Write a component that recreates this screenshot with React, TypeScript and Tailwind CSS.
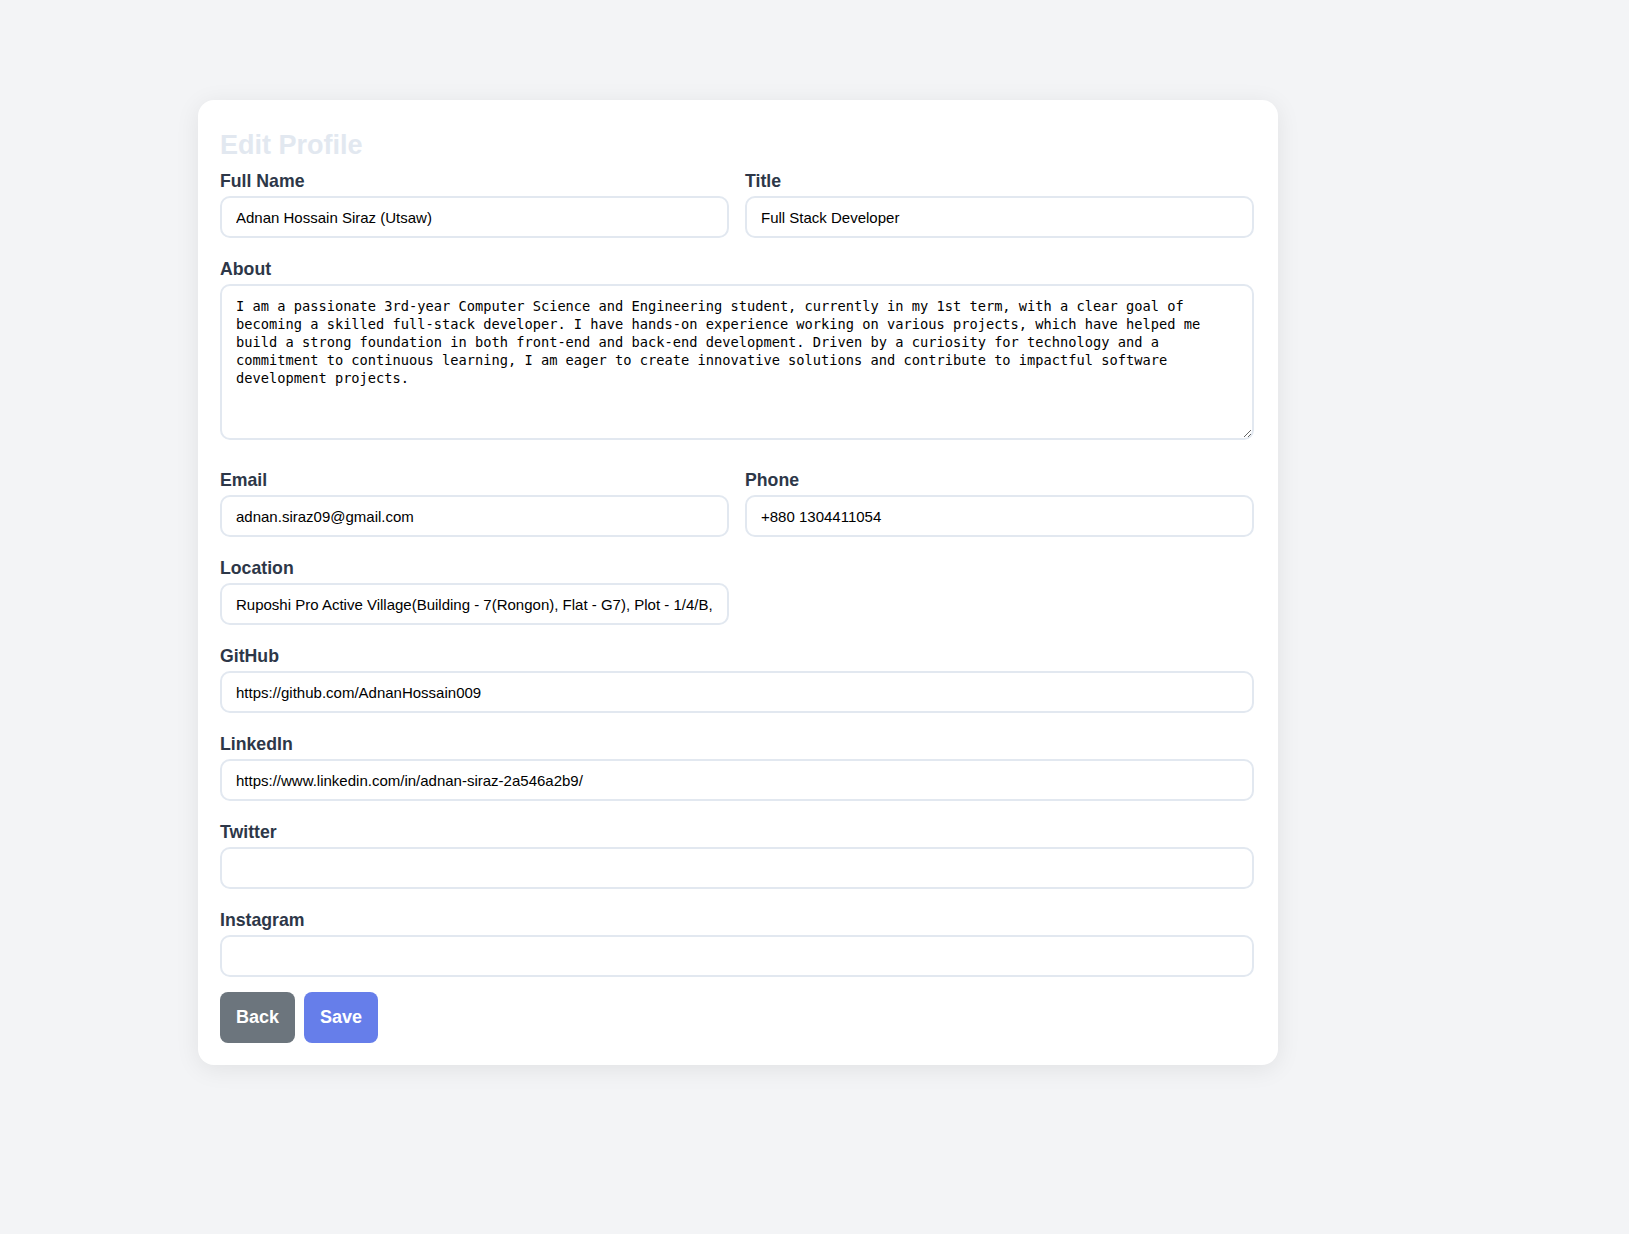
import { ReactNode } from 'react';

const labelCls = 'mb-[5px] block text-[17.7px] font-bold leading-[20px] text-[#2d3748]';
const inputCls =
  'block h-[42px] w-full rounded-[10px] border-2 border-[#e2e8f0] bg-white px-[14px] text-[15px] leading-[18px] text-black outline-none';

function Field({ label, value = '', className = 'mb-[21px]' }: { label: string; value?: string; className?: string }) {
  return (
    <div className={className}>
      <label className={labelCls}>{label}</label>
      <input type="text" defaultValue={value} className={inputCls} />
    </div>
  );
}

function Row({ children }: { children: ReactNode }) {
  return <div className="grid grid-cols-2 gap-x-[16px]">{children}</div>;
}

const about =
  'I am a passionate 3rd-year Computer Science and Engineering student, currently in my 1st term, with a clear goal of becoming a skilled full-stack developer. I have hands-on experience working on various projects, which have helped me build a strong foundation in both front-end and back-end development. Driven by a curiosity for technology and a commitment to continuous learning, I am eager to create innovative solutions and contribute to impactful software development projects.';

export default function App() {
  return (
    <div className="min-h-screen bg-[#f3f4f6] pl-[198px] pt-[100px] font-['Liberation_Sans',Arial,sans-serif]">
      <div className="w-[1080px] rounded-2xl bg-white pb-[22px] pl-[22px] pr-[24px] pt-[29px] shadow-[0_4px_24px_rgba(0,0,0,0.08)]">
        <h2 className="mb-[10px] text-[27px] font-bold leading-[32px] text-[#e2e8f0]">Edit Profile</h2>

        <Row>
          <Field label="Full Name" value="Adnan Hossain Siraz (Utsaw)" />
          <Field label="Title" value="Full Stack Developer" />
        </Row>

        <div className="mb-[30px]">
          <label className={labelCls}>About</label>
          <textarea
            defaultValue={about}
            className="block h-[156px] w-full rounded-[10px] border-2 border-[#e2e8f0] bg-white px-[14px] pb-[12px] pt-[11px] font-['DejaVu_Sans_Mono',monospace] text-[13.7px] leading-[18px] text-black outline-none"
          />
        </div>

        <Row>
          <Field label="Email" value="adnan.siraz09@gmail.com" />
          <Field label="Phone" value="+880 1304411054" />
        </Row>

        <Row>
          <Field
            label="Location"
            value="Ruposhi Pro Active Village(Building - 7(Rongon), Flat - G7), Plot - 1/4/B, Section - 12, Mirpur, Dhaka"
          />
        </Row>

        <Field label="GitHub" value="https://github.com/AdnanHossain009" />
        <Field label="LinkedIn" value="https://www.linkedin.com/in/adnan-siraz-2a546a2b9/" />
        <Field label="Twitter" />
        <Field label="Instagram" className="mb-[15px]" />

        <div className="flex gap-[9px]">
          <button className="rounded-lg bg-[#6c757d] px-4 py-[15px] text-[18px] font-bold leading-[21px] text-white">
            Back
          </button>
          <button className="rounded-lg bg-[#667eea] px-4 py-[15px] text-[18px] font-bold leading-[21px] text-white">
            Save
          </button>
        </div>
      </div>
    </div>
  );
}
